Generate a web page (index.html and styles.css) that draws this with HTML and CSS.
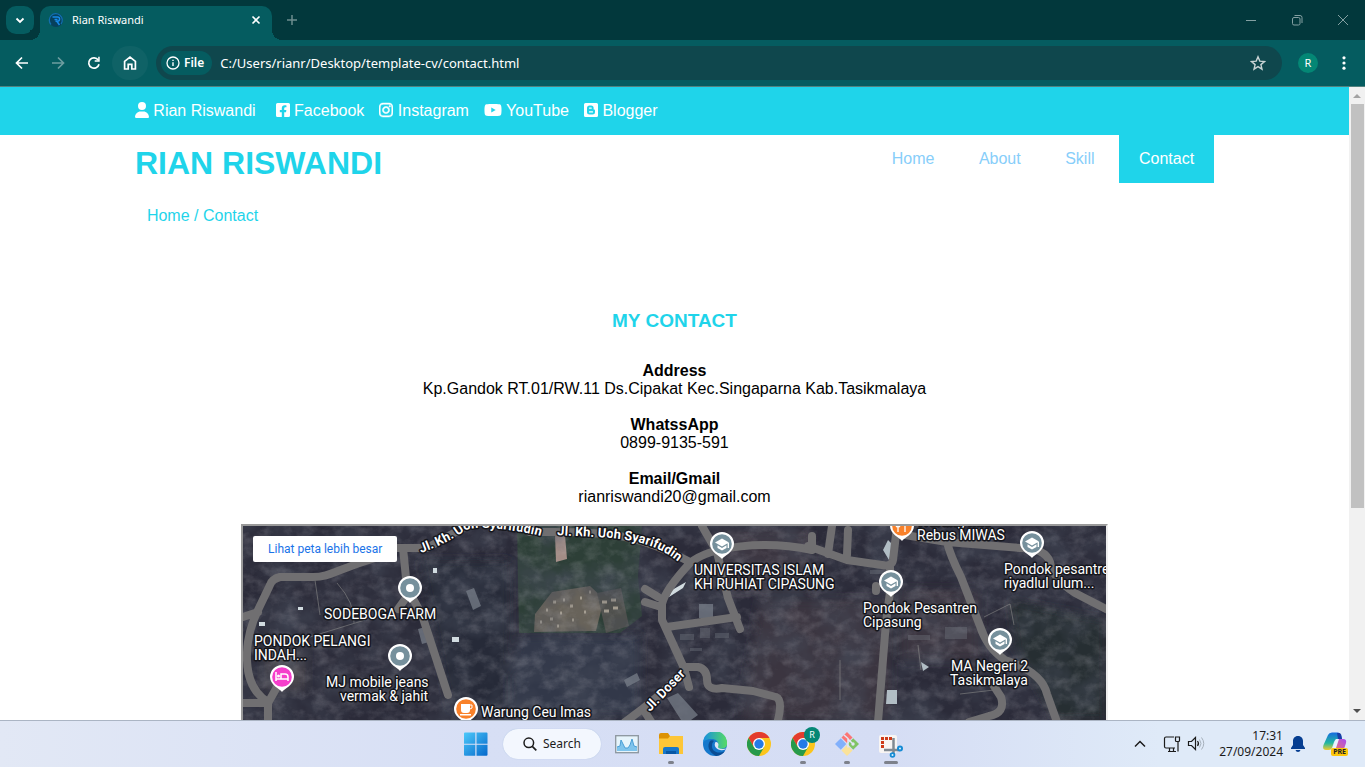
FILE: index.html
```html
<!DOCTYPE html>
<html lang="id">
<head>
<meta charset="utf-8">
<title>Rian Riswandi</title>
<link rel="stylesheet" href="styles.css">
</head>
<body>
<div class="tabstrip">
  <button class="tab-search" aria-label="Search tabs"><svg width="12" height="12" viewBox="0 0 12 12" class="line"><path d="M2.500 4.500 6 8l3.500-3.500" stroke-width="1.800"/></svg></button>
  <div class="tab">
    <svg width="16" height="16" viewBox="0 0 16 16" class="favicon"><circle cx="8" cy="8" r="7" fill="#07405c"/><path d="M3 12.500A6.500 6.500 0 1 1 13 12" stroke="#126fae" stroke-width="1.300"/><path d="M4.500 5h5a2 2 0 0 1 0 4.200H7.500M9 9.500l2.500 3.500M6.500 7.500h3" stroke="#168ae8" stroke-width="1.500"/></svg>
    <span class="tab-title">Rian Riswandi</span>
    <button class="tab-close" aria-label="Close tab"><svg width="10" height="10" viewBox="0 0 10 10" class="line"><path d="M1.500 1.500l7 7M8.500 1.500l-7 7" stroke-width="1.600"/></svg></button>
  </div>
  <button class="tab-new" aria-label="New tab"><svg width="12" height="12" viewBox="0 0 12 12" class="line"><path d="M6 1v10M1 6h10" stroke-width="1.500"/></svg></button>
  <div class="window-controls">
    <button aria-label="Minimize"><svg width="12" height="12" viewBox="0 0 12 12" class="line"><path d="M1 6.500h10"/></svg></button>
    <button aria-label="Restore"><svg width="12" height="12" viewBox="0 0 12 12" class="line"><rect x="1.500" y="3.500" width="7.500" height="7.500" rx="1.500"/><path d="M3.500 1.500H9a2 2 0 0 1 2 2V9"/></svg></button>
    <button aria-label="Close"><svg width="12" height="12" viewBox="0 0 12 12" class="line"><path d="M1 1l10 10M11 1L1 11"/></svg></button>
  </div>
</div>
<div class="toolbar">
  <button aria-label="Back"><svg width="16" height="16" viewBox="0 0 16 16" class="line"><path d="M14 8H2.500M8 2.500 2.500 8 8 13.500" stroke-width="1.700"/></svg></button>
  <button class="disabled" aria-label="Forward"><svg width="16" height="16" viewBox="0 0 16 16" class="line"><path d="M2 8h11.500M8 2.500 13.500 8 8 13.500" stroke-width="1.700"/></svg></button>
  <button aria-label="Reload"><svg width="16" height="16" viewBox="0 0 16 16" class="line"><path d="M13 9.200A5.200 5.200 0 1 1 12.200 5" stroke-width="1.700"/><path d="M13.700 1.800v5H8.700V5.300h3.500V1.800z" fill="currentColor" stroke="none"/></svg></button>
  <button class="home" aria-label="Home"><svg width="16" height="16" viewBox="0 0 16 16" class="line"><path d="M2.600 14V6.300L8 2l5.400 4.300V14H9.800V9.300H6.200V14z" stroke-width="1.700"/></svg></button>
  <div class="omnibox">
    <button class="file-chip"><svg width="14" height="14" viewBox="0 0 14 14" class="line"><circle cx="7" cy="7" r="6" stroke-width="1.300"/><path d="M7 6.200V10M7 3.700v1.400" stroke-width="1.400"/></svg>File</button>
    <input class="url" aria-label="Address" value="C:/Users/rianr/Desktop/template-cv/contact.html">
    <button class="bookmark" aria-label="Bookmark"><svg width="16" height="16" viewBox="0 0 16 16" class="line"><path d="M8 1.800l1.800 4.300 4.700.4-3.600 3.100 1.100 4.600L8 11.700l-4 2.500 1.100-4.600L1.500 6.500l4.700-.4z" stroke-width="1.400"/></svg></button>
  </div>
  <button class="profile" aria-label="Profile"><span class="avatar">R</span></button>
  <button aria-label="Menu"><svg width="16" height="16" viewBox="0 0 16 16" fill="currentColor"><circle cx="8" cy="2.800" r="1.600"/><circle cx="8" cy="8" r="1.600"/><circle cx="8" cy="13.200" r="1.600"/></svg></button>
</div>

<div class="viewport">
  <div class="page">
    <div class="social">
      <ul class="container social-list">
        <li class="owner"><a href="#"><svg width="14" height="16" viewBox="0 0 448 512"><path d="M224 256A128 128 0 1 0 224 0a128 128 0 1 0 0 256zm-45.700 48C79.800 304 0 383.800 0 482.300C0 498.700 13.300 512 29.700 512H418.300c16.400 0 29.700-13.300 29.700-29.700C448 383.800 368.200 304 269.700 304H178.300z"/></svg> Rian Riswandi</a></li>
        <li><a href="#"><svg width="14" height="16" viewBox="0 0 448 512"><path d="M400 32H48A48 48 0 0 0 0 80v352a48 48 0 0 0 48 48h137.250V327.690h-63V256h63v-54.640c0-62.150 37-96.480 93.670-96.480 27.140 0 55.520 4.840 55.520 4.840v61h-31.270c-30.810 0-40.420 19.120-40.420 38.730V256h68.780l-11 71.690h-57.780V480H400a48 48 0 0 0 48-48V80a48 48 0 0 0-48-48z"/></svg> Facebook</a></li>
        <li><a href="#"><svg width="14" height="16" viewBox="0 0 448 512" class="heavy"><path d="M224.100 141c-63.600 0-114.900 51.300-114.900 114.900s51.300 114.900 114.900 114.900S339 319.500 339 255.900 287.700 141 224.100 141zm0 189.600c-41.100 0-74.700-33.500-74.700-74.700s33.500-74.700 74.700-74.700 74.700 33.500 74.700 74.700-33.600 74.700-74.700 74.700zm146.400-194.300c0 14.900-12 26.800-26.800 26.800-14.900 0-26.800-12-26.800-26.800s12-26.800 26.800-26.800 26.800 12 26.800 26.800zm76.100 27.200c-1.700-35.900-9.900-67.700-36.200-93.900-26.200-26.200-58-34.400-93.900-36.200-37-2.100-147.900-2.100-184.900 0-35.800 1.700-67.600 9.900-93.900 36.100s-34.400 58-36.200 93.900c-2.100 37-2.100 147.900 0 184.900 1.700 35.900 9.900 67.700 36.200 93.900s58 34.400 93.900 36.200c37 2.100 147.900 2.100 184.900 0 35.900-1.700 67.700-9.900 93.900-36.200 26.200-26.200 34.400-58 36.200-93.900 2.100-37 2.100-147.800 0-184.800zM398.800 388c-7.800 19.600-22.900 34.700-42.600 42.600-29.500 11.700-99.500 9-132.100 9s-102.700 2.600-132.100-9c-19.600-7.800-34.700-22.900-42.600-42.600-11.700-29.500-9-99.500-9-132.100s-2.600-102.700 9-132.100c7.800-19.600 22.900-34.700 42.600-42.600 29.500-11.700 99.500-9 132.100-9s102.700-2.600 132.100 9c19.600 7.800 34.700 22.900 42.600 42.600 11.700 29.500 9 99.500 9 132.100s2.700 102.700-9 132.100z"/></svg> Instagram</a></li>
        <li><a href="#"><svg width="18" height="16" viewBox="0 0 576 512"><path d="M549.655 124.083c-6.281-23.650-24.787-42.276-48.284-48.597C458.781 64 288 64 288 64S117.220 64 74.629 75.486c-23.497 6.322-42.003 24.947-48.284 48.597-11.412 42.867-11.412 132.305-11.412 132.305s0 89.438 11.412 132.305c6.281 23.650 24.787 41.500 48.284 47.821C117.220 448 288 448 288 448s170.780 0 213.371-11.486c23.497-6.321 42.003-24.171 48.284-47.821 11.412-42.867 11.412-132.305 11.412-132.305s0-89.438-11.412-132.305zm-317.510 213.508V175.185l142.739 81.205-142.739 81.201z"/></svg> YouTube</a></li>
        <li><a href="#"><svg width="14" height="16" viewBox="0 0 448 512"><path fill-rule="evenodd" d="M48 32h352a48 48 0 0 1 48 48v352a48 48 0 0 1-48 48H48a48 48 0 0 1-48-48V80a48 48 0 0 1 48-48zM176 112a80 80 0 0 0-80 80v128a80 80 0 0 0 80 80h96a80 80 0 0 0 80-80v-50c0-20-8-30-28-32-12-1-16-6-16-18v-28a80 80 0 0 0-80-80zM176 172h56a20 20 0 0 1 0 40h-56a20 20 0 0 1 0-40zM176 298h96a20 20 0 0 1 0 40h-96a20 20 0 0 1 0-40z"/></svg> Blogger</a></li>
      </ul>
    </div>
    <header class="container masthead">
      <h1>RIAN RISWANDI</h1>
      <nav>
        <ul>
          <li><a href="#">Home</a></li>
          <li><a href="#">About</a></li>
          <li><a href="#">Skill</a></li>
          <li><a href="#" class="active">Contact</a></li>
        </ul>
      </nav>
    </header>
    <div class="container breadcrumb"><a href="#">Home</a> / <a href="#">Contact</a></div>
    <section class="container contact">
      <h3>MY CONTACT</h3>
      <p><b>Address</b><br>Kp.Gandok RT.01/RW.11 Ds.Cipakat Kec.Singaparna Kab.Tasikmalaya</p>
      <p><b>WhatssApp</b><br>0899-9135-591</p>
      <p><b>Email/Gmail</b><br>rianriswandi20@gmail.com</p>
      <div class="map">
        <svg class="map-canvas" viewBox="243 526 863 396" preserveAspectRatio="xMidYMin slice" role="img" aria-label="Peta">
          <defs>
            <filter id="grain" x="0" y="0" width="100%" height="100%"><feTurbulence type="fractalNoise" baseFrequency=".07 .09" numOctaves="5" seed="8"/><feColorMatrix values="0 0 0 0 .55  0 0 0 0 .54  0 0 0 0 .58  1.200 0 0 0 -.5"/></filter>
            <filter id="shade" x="0" y="0" width="100%" height="100%"><feTurbulence type="fractalNoise" baseFrequency=".03" numOctaves="4" seed="3"/><feColorMatrix values="0 0 0 0 .06  0 0 0 0 .07  0 0 0 0 .1  0 1.200 0 0 -.4"/></filter>
            <filter id="soft" x="-20%" y="-20%" width="140%" height="140%"><feGaussianBlur stdDeviation="5"/></filter>
            <g id="pin"><path d="M0 15c-2-3-12-7-12-15a12 12 0 0 1 24 0C12 8 2 12 0 15z" fill="#fff"/><circle r="9.800"/></g>
            <g id="school"><use href="#pin" fill="#76909c"/><path d="M-7-1.500 0-5.500 7-1.500 0 2.500zM-4.500 1.300 0 3.900 4.500 1.300V4L0 6.500-4.500 4zM5.600-1H7v5H5.600z" fill="#fff"/></g>
            <g id="place"><use href="#pin" fill="#76909c"/><circle r="4" fill="#fff"/></g>
            <path id="street-a" d="M421 553Q448 543 464 531Q478 523 537 535L548 538"/>
            <path id="street-b" d="M557 535C602 538 640 535 672 557L684 566"/>
            <path id="street-c" d="M650 712 690 670"/>
          </defs>
          <rect x="243" y="526" width="863" height="396" fill="#2b2b39"/>
          <g filter="url(#soft)">
            <path d="M760 600h130v120H740zM720 530h90v60h-90zM900 590h80v70h-80z" fill="#3b3540"/>
            <path d="M520 635h120v80H500z" fill="#303749"/>
            <path d="M1010 600l96 20v100h-50l-40-70z" fill="#252d32"/>
            <path d="M420 560h90v150h-60z" fill="#282a39"/>
            <path d="M265 650h40v40h-40z" fill="#4a474e"/>
          </g>
          <path d="M517 526h125l-4 50 4 40-22 17H519z" fill="#2d3f37"/>
          <path d="M534 632l1-18 17-22 38-6 14 13-8 32z" fill="#68635a"/>
          <path d="M597 593l24-5 8 38-23 7z" fill="#4f504d"/>
          <path d="M555 535h10l2 24-11 3z" fill="#a38d86"/>
          <path d="M540 622h2M546 610h2M553 602h3M550 619h3M560 613h2M563 600h2M570 606h3M572 620h2M580 598h2M584 612h2M557 626h2M589 592h2M602 602h5M611 600h5M604 611h5M613 608h5" stroke="#a39c8f" stroke-width="3"/>
          <rect x="243" y="526" width="863" height="396" filter="url(#shade)"/>
          <rect x="243" y="526" width="863" height="396" filter="url(#grain)" opacity=".38"/>
          <g fill="#777e88">
            <path d="M466 591l8-3 7 18-8 4zM418 629l7-2 4 15-7 2zM699 604h14v14h-14zM667 698l11-5 20 22-7 5h-10zM624 680l13-7 3 7-13 7z" opacity=".75"/>
            <path d="M672 590l14-8-3 6-14 9zM452 637h7v5h-7zM433 568h4v5h-4zM259 622h6v4h-6zM298 607h5v3h-5z" fill="#d2dce0"/>
            <path d="M887 690h10v14h-11zM921 662l8 5-6 4zM883 550l5-10 5 5-4 15z" fill="#b1bdc4"/>
            <path d="M908 635h22v5h-22zM945 627h22v12h-22zM870 570h20v4h-20zM680 634h14v6h-14zM700 628h10v10h-10zM715 633h14v5h-14zM690 648h12v3h-12z" opacity=".35"/>
          </g>
          <g fill="none" stroke="#989793" stroke-width="1" opacity=".5">
            <path d="M337 583q18 20 17 40M300 640l65-20M315 580l5 35M984 617l26-13 4 21M918 645l3 25M840 660v40M960 694l34-4"/>
          </g>
          <g class="roads">
            <path d="M375 558C335 570 330 577 313 577H280Q272 579 270 585L258 610Q246 635 247 660Q248 690 268 702V724M243 617l15-5M243 703h25l9-16"/>
            <path d="M387 548h40l43-24M403 548l4 40 15 27 26 80M408 595l-10 14"/>
            <path d="M530 532h23C610 532 640 535 690 562M812 550C765 540 710 546 690 563Q665 590 662 604V620L684 668 689 687M645 589l13 8M645 602l16 5M667 627 737 617M702 526l15 26 11 46 12 31"/>
            <path d="M686 667h12q9 2 9 13t15 8l31 3 23 6q7 3 2 23M684 671Q660 697 625 722M643 709l9 14"/>
            <path d="M808 546l39 14 35 5q10 2 11-5l4-34M812 536v13M832 526l-4 28M848 530l-1 25M890 567v25l-4 30-8 100M876 586v5"/>
            <path d="M905 535 947 542 1020 548Q1045 548 1050 562Q1052 578 1075 593L1108 610M947 542Q950 555 961 577L980 626Q987 648 1005 660Q1042 672 1047 694L1057 722M990 680l11 17q5 16-12 19l-20 6"/>
          </g>
          <g class="street">
            <text><textPath href="#street-a">Jl. Kh. Uoh Syarifudin</textPath></text>
            <text><textPath href="#street-b">Jl. Kh. Uoh Syarifudin</textPath></text>
            <text><textPath href="#street-c">Jl. Doser</textPath></text>
          </g>
          <use href="#place" x="410" y="588"/><use href="#place" x="400" y="656"/>
          <use href="#school" x="722" y="544"/><use href="#school" x="891" y="582"/><use href="#school" x="1032" y="543"/><use href="#school" x="1000" y="640"/>
          <use href="#pin" x="282" y="677" fill="#f53ecb"/><path d="M276 672v9M276 679h12M288 681v-4q0-3-3-3h-4v5" fill="none" stroke="#fff" stroke-width="1.500"/><circle cx="278.500" cy="676" r="1.500" fill="#fff"/>
          <use href="#pin" x="466" y="709" fill="#f9812a"/><path d="M461 704h9v6q0 3-3 3h-3q-3 0-3-3zM460 714h11v1.500h-11z" fill="#fff"/><path d="M470 705h2q1 4-2 4" fill="none" stroke="#fff"/>
          <use href="#pin" x="902" y="526" fill="#f9812a"/><path d="M898 524v8M896 522v3q0 2 2 2t2-2v-3M905 532v-6l-2-3" fill="none" stroke="#fff" stroke-width="1.300"/>
          <g class="labels">
            <text x="324" y="619">SODEBOGA FARM</text>
            <text x="254" y="646">PONDOK PELANGI<tspan x="254" dy="14">INDAH...</tspan></text>
            <text x="326" y="687">MJ mobile jeans<tspan x="340" dy="14">vermak &amp; jahit</tspan></text>
            <text x="481" y="717">Warung Ceu Imas</text>
            <text x="694" y="575">UNIVERSITAS ISLAM<tspan x="694" dy="14">KH RUHIAT CIPASUNG</tspan></text>
            <text x="863" y="613">Pondok Pesantren<tspan x="863" dy="14">Cipasung</tspan></text>
            <text x="917" y="526">Warung Mie<tspan x="917" dy="14">Rebus MIWAS</tspan></text>
            <text x="1004" y="574">Pondok pesantren<tspan x="1004" dy="14">riyadlul ulum...</tspan></text>
            <text x="951" y="671">MA Negeri 2<tspan x="950" dy="14">Tasikmalaya</tspan></text>
          </g>
        </svg>
        <a href="#" class="map-link">Lihat peta lebih besar</a>
      </div>
    </section>
  </div>
  <div class="scrollbar">
    <svg width="16" height="17" viewBox="0 0 16 17"><path d="M4 11l4-4 4 4z" fill="#a3a3a3"/></svg>
    <div class="track"><div class="thumb"></div></div>
    <svg width="16" height="17" viewBox="0 0 16 17"><path d="M4 6h8l-4 4z" fill="#505050"/></svg>
  </div>
</div>

<div class="taskbar">
  <div class="apps">
    <button aria-label="Start"><svg width="24" height="24" viewBox="0 0 24 24"><defs><linearGradient id="win" x1="0" y1="0" x2="1" y2="1" ><stop offset="0" stop-color="#4cc9fa"/><stop offset="1" stop-color="#0568cb"/></linearGradient></defs><path d="M0 1.500Q0 .5 1 .5h10.300v11.200H0zM12.500.5H22.500q1 0 1 1v10.200h-11zM0 12.700h11.300v11H1q-1 0-1-1zM12.500 12.700h11v10q0 1-1 1h-10z" fill="url(#win)"/></svg></button>
    <button class="search"><svg width="14" height="14" viewBox="0 0 14 14" class="line"><circle cx="5.800" cy="5.800" r="4.800" stroke-width="1.500"/><path d="M9.300 9.300 13.300 13.300" stroke-width="1.700"/></svg>Search</button>
    <button aria-label="Performance"><svg width="24" height="24" viewBox="0 0 24 24"><rect x=".7" y="3.700" width="22.600" height="17" fill="#e6f4fb" stroke="#8b969e" stroke-width="1.300"/><path d="M2 15l3-1 1-6 2 4 2 4 3 0 2-3 2-6 2 7 3 1v4H2z" fill="#7fc4ec"/><path d="M2 15l3-1 1-6 2 4 2 4 3 0 2-3 2-6 2 7 3 1" fill="none" stroke="#4a9fd6"/></svg></button>
    <button class="open" aria-label="File Explorer"><svg width="24" height="24" viewBox="0 0 24 24"><path d="M0 3q0-2 2-2h7l2 3v3H0z" fill="#dc9204"/><path d="M0 6.500h9l2-2.500h13v18H0z" fill="#fdc638"/><path d="M4 22v-5q0-2 2-2h12q2 0 2 2v5z" fill="#1777ca"/><path d="M7 19h10v3H7z" fill="#0757a5"/></svg></button>
    <button aria-label="Edge"><svg width="24" height="24" viewBox="0 0 24 24"><defs><linearGradient id="edge"><stop offset="0" stop-color="#168ee2"/><stop offset="1" stop-color="#56db65"/></linearGradient></defs><circle cx="12" cy="12" r="12" fill="#1678cc"/><path d="M0 11A12 12 0 0 1 24 11c.5 5-4 6.500-8 5.500-2-.5-2-2-1-3.500 1-3-2-6-6-6-5 0-9 2-9 4z" fill="url(#edge)"/><path d="M7 9c-3 4-2 11 6 15 4-.3 7-2 9-5-7 4-14 0-13-6 0-2 1-3 2-4-1-1-3-1-4 0z" fill="#0b4d94"/><path d="M12.500 10c-2 3 0 7 4.500 8 3 .5 5 0 6.500-1.500-3 .8-6 .6-8-.5-1-1 0-2 0-3.500 0-1.500-1.500-3-3-2.500z" fill="#dce5f6"/></svg></button>
    <button aria-label="Chrome"><svg width="24" height="24" viewBox="0 0 24 24"><g id="chrome"><circle cx="12" cy="12" r="12" fill="#fbc51c"/><path d="M1.600 6A12 12 0 0 1 22.400 6H12L6.800 15z" fill="#e33b2e"/><path d="M1.600 6 6.800 15 12 18 12 24A12 12 0 0 1 1.600 6z" fill="#269a4b"/><path d="M12 24 17.200 15H6.800z" fill="#269a4b"/><circle cx="12" cy="12" r="6" fill="#fff"/><circle cx="12" cy="12" r="4.700" fill="#247be7"/></g></svg></button>
    <button class="open" aria-label="Chrome profile R"><svg width="24" height="24" viewBox="0 0 24 24"><use href="#chrome"/></svg><span class="badge">R</span></button>
    <button class="open" aria-label="Git"><svg width="24" height="24" viewBox="0 0 24 24"><path d="M12 0l5.500 5.500-5.500 5.500-5.500-5.500z" fill="#fb7676"/><path d="M5.800 6.200l5.500 5.800-5.500 5.800L0 12z" fill="#82b0fb"/><path d="M18.200 6.200 24 12l-5.800 5.800-5.500-5.800z" fill="#80c464"/><path d="M12 13l5.500 5.500L12 24l-5.500-5.500z" fill="#fae29a"/><path d="M9 3l4 3.500v9M13 7l4 4" stroke="#e2e7f5" stroke-width="1.500" fill="none"/><circle cx="18" cy="12" r="1.700" fill="#e2e7f5"/></svg></button>
    <button class="open active-app" aria-label="Snipping Tool"><svg width="24" height="28" viewBox="0 0 24 28"><rect y="5" width="18" height="18" rx="2" fill="#f8f5f3"/><path d="M3.500 18V8.500H13" fill="none" stroke="#ce3b18" stroke-width="3" stroke-dasharray="3 1"/><path d="M14.500 8v16M5 20h16" stroke="#818a92" stroke-width="2.500"/><circle cx="21" cy="18.500" r="3" fill="#168bd4"/><circle cx="13.500" cy="25" r="2.800" fill="#168bd4"/><circle cx="21" cy="18.500" r="1" fill="#dff3ff"/><circle cx="13.500" cy="25" r="1" fill="#dff3ff"/></svg></button>
  </div>
  <div class="tray">
    <button class="chevron" aria-label="Hidden icons"><svg width="12" height="12" viewBox="0 0 12 12" class="line"><path d="M1 8.500 6 3.500l5 5" stroke-width="1.500"/></svg></button>
    <button class="status" aria-label="Network and volume"><svg width="18" height="18" viewBox="0 0 18 18" class="line"><path d="M11 2H3Q1.500 2 1.500 3.500v8Q1.500 13 3 13h9M5 16.500h8M6.500 13v3M10.500 13v3M15 7v9.500M12.500 2h4v3.500q0 1-1 1h-2q-1 0-1-1z" stroke-width="1.200"/></svg><svg width="18" height="18" viewBox="0 0 18 18" class="line"><path d="M1.500 6.500h3l4-4v12l-4-4h-3zM10.500 6q2 2.500 0 5" stroke-width="1.200"/><path d="M12.500 4.500q3 4 0 8M14.500 2.500q4.500 6 0 12" stroke="#a6b0bb"/></svg></button>
    <button class="clock">17:31<br>27/09/2024</button>
    <button class="bell" aria-label="Notifications"><svg width="14" height="16" viewBox="0 0 14 16"><path d="M7 0c3.300 0 5 2.500 5 5v4l2 3v1H0v-1l2-3V5c0-2.500 1.700-5 5-5zM4.500 14h5Q9 16 7 16t-2.500-2z" fill="#063e91"/></svg></button>
    <button class="copilot" aria-label="Copilot"><svg width="24" height="24" viewBox="0 0 24 24"><defs><linearGradient id="cp1" x1="0" y1="0" x2="0" y2="1"><stop offset="0" stop-color="#156ce0"/><stop offset=".6" stop-color="#23b8a0"/><stop offset="1" stop-color="#f4cb2e"/></linearGradient><linearGradient id="cp2" x1="1" y1="0" x2="0" y2="1"><stop offset="0" stop-color="#a74bf2"/><stop offset="1" stop-color="#fa8056"/></linearGradient></defs><path d="M5 3q1-2.500 4-2.500h6q2 0 3 3L19 7h-5q-2 0-3 3l-2 6q-1 2-3 2H3q-4 0-2.500-5z" fill="url(#cp1)"/><path d="M14 7h6q4 0 3 4l-2 6q-1 3-4 3H8q2 0 3-3z" fill="url(#cp2)"/><path d="M14 1h2q2 0 2.500 3L19 7h-4z" fill="#173ea8"/><path d="M13 7h3l-3 9q-1 3-4 3H7q2-1 3-4z" fill="#e9f3ff"/></svg><span class="pre">PRE</span></button>
  </div>
</div>
</body>
</html>
```
FILE: styles.css
```css
* { box-sizing: border-box; }

body {
  margin: 0;
  height: 100vh;
  display: flex;
  flex-direction: column;
  overflow: hidden;
  background: #fff;
  font-family: "Liberation Sans", Arial, sans-serif;
  font-size: 16px;
  line-height: 18px;
}

button {
  border: 0;
  padding: 0;
  background: none;
  color: inherit;
  font: inherit;
  display: flex;
  align-items: center;
  justify-content: center;
}

a { color: inherit; text-decoration: none; }
ul { list-style: none; margin: 0; padding: 0; }
svg { flex: none; }
.line { fill: none; stroke: currentColor; stroke-width: 1; }

/* Browser frame */
.tabstrip, .toolbar, .taskbar { font-family: "Noto Sans", "Open Sans", sans-serif; font-size: 12px; flex: none; }

.tabstrip {
  height: 40px;
  display: flex;
  align-items: center;
  background: #02383c;
  color: #fff;
  padding-left: 6px;
}
.tab-search { width: 28px; height: 28px; border-radius: 10px; background: #055c60; }
.tab {
  align-self: flex-end;
  position: relative;
  width: 232px;
  height: 34px;
  margin-left: 6px;
  padding: 0 10px 6px 8px;
  display: flex;
  align-items: center;
  gap: 8px;
  border-radius: 10px 10px 0 0;
  background: #055c60;
}
.tab::before, .tab::after {
  content: "";
  position: absolute;
  bottom: 0;
  width: 10px;
  height: 10px;
}
.tab::before { right: 100%; background: radial-gradient(circle at 0 0, #02383c 10px, #055c60 10px); }
.tab::after { left: 100%; background: radial-gradient(circle at 100% 0, #02383c 10px, #055c60 10px); }
.favicon { fill: none; }
.tab-title { flex: 1; font-size: 11px; }
.tab-close { width: 12px; height: 20px; }
.tab-new { width: 28px; height: 28px; margin-left: 6px; color: #6e8d8f; }
.window-controls { margin-left: auto; display: flex; color: #84a0a2; }
.window-controls button { width: 46px; height: 40px; }
.window-controls button:last-child { width: 45px; }

.toolbar {
  height: 47px;
  display: flex;
  align-items: center;
  padding: 0 3px 0 4px;
  background: #055c60;
  border-bottom: 1px solid #52827f;
  color: #fff;
}
.toolbar > button { width: 36px; height: 34px; }
.toolbar .disabled { color: #6e9da0; }
.toolbar .home { border-radius: 17px; background: #0f6266; }
.omnibox {
  flex: 1;
  height: 34px;
  margin: 0 8px;
  padding: 0 16px 0 5px;
  display: flex;
  align-items: center;
  border-radius: 17px;
  background: #0f474d;
}
.file-chip { height: 24px; padding: 0 8px 0 5px; gap: 4px; border-radius: 12px; background: #055c60; font-weight: 600; }
.url {
  flex: 1;
  min-width: 0;
  margin-left: 8px;
  padding: 0;
  border: 0;
  background: none;
  color: #fff;
  font: 13px/18px "Noto Sans", "Open Sans", sans-serif;
}
.bookmark { color: #c9d4d5; }
.avatar { width: 20px; height: 20px; border-radius: 10px; background: #048775; text-align: center; font-size: 11px; line-height: 20px; }

/* Web page */
.viewport { flex: 1; min-height: 0; display: flex; }
.page { flex: 1; overflow: hidden; }
.container { width: 80%; margin: 0 auto; }

.social { background: #1fd4ea; color: #fff; padding: 15px 0; }
.social-list { display: flex; gap: 15px; }
.social-list .owner { margin-right: 5px; }
.social-list svg { fill: currentColor; vertical-align: -2px; }
.social-list .heavy { stroke: currentColor; stroke-width: 16px; }

.masthead { display: flex; justify-content: space-between; align-items: flex-start; }
.masthead h1 { margin: 0; padding-top: 10px; font-size: 32px; line-height: 37px; color: #1fd4ea; }
.masthead li { display: inline-block; }
.masthead nav a { display: block; padding: 15px 20px; color: #87cefa; }
.masthead nav a.active { background: #1fd4ea; color: #fff; }

.breadcrumb { padding: 24px 12px 0; color: #1fd4ea; }

.contact { padding-top: 85px; text-align: center; color: #000; }
.contact h3 { margin: 0 0 30px; font-size: 19px; line-height: 22px; color: #1fd4ea; }
.contact p { margin: 0 0 18px; }

.map {
  position: relative;
  width: 867px;
  max-width: 100%;
  margin: 0 auto;
  border: 2px inset #eee;
  overflow: hidden;
  font-family: Roboto, sans-serif;
}
.map-canvas { display: block; width: 100%; height: 396px; }
.map-link {
  position: absolute;
  top: 10px;
  left: 10px;
  padding: 4px 15px;
  border-radius: 2px;
  background: #fff;
  color: #1a73e8;
  font-size: 12px;
}
.roads path { fill: none; stroke: #706f71; stroke-width: 8; stroke-linecap: round; stroke-linejoin: round; }
.labels text { font-size: 14px; fill: #fff; stroke: #15161c; stroke-width: 3; paint-order: stroke; stroke-linejoin: round; }
.street text { font-size: 13px; font-weight: 700; fill: #fff; stroke: #15161c; stroke-width: 3; paint-order: stroke; stroke-linejoin: round; }

.scrollbar { width: 16px; flex: none; display: flex; flex-direction: column; background: #f1f1f1; }
.track { flex: 1; padding: 0 1px 0 2px; }
.thumb { height: 67.500%; background: #c1c1c1; }

/* Desktop taskbar */
.taskbar {
  height: 47px;
  display: grid;
  grid-template-columns: 1fr auto 1fr;
  align-items: center;
  border-top: 1px solid #abb5c4;
  background: linear-gradient(90deg, #e2e8f5 0%, #d7dff5 35%, #d5ddf4 65%, #dfeaf8 85%);
  color: #1b1b1b;
}
.apps { grid-column: 2; display: flex; align-items: center; padding-left: 2px; }
.apps button { position: relative; width: 44px; height: 46px; }
.apps .search { width: 98px; height: 30px; margin: 0 4px 0 5px; gap: 6px; border-radius: 15px; background: #f3f7fe; box-shadow: 0 0 1px #9fb8da; }
.open::after { content: ""; position: absolute; bottom: 3px; width: 6px; height: 3px; border-radius: 2px; background: #7d818b; }
.active-app::after { width: 14px; }
.badge { position: absolute; top: 6px; right: 5px; width: 16px; height: 16px; border-radius: 8px; background: #048775; color: #fff; font-size: 9px; line-height: 16px; }
.tray { display: flex; align-items: center; justify-content: flex-end; padding-right: 18px; }
.chevron { width: 24px; height: 32px; margin-right: 11px; }
.status { gap: 6px; }
.tray .clock { display: block; margin-left: 14px; text-align: right; line-height: 16px; }
.bell { margin-left: 8px; }
.copilot { position: relative; margin-left: 18px; }
.pre { position: absolute; right: -1px; bottom: 0; padding: 0 2px; border-radius: 2px; background: #fdc60b; color: #222; font-size: 7px; font-weight: 700; line-height: 8px; }
```
